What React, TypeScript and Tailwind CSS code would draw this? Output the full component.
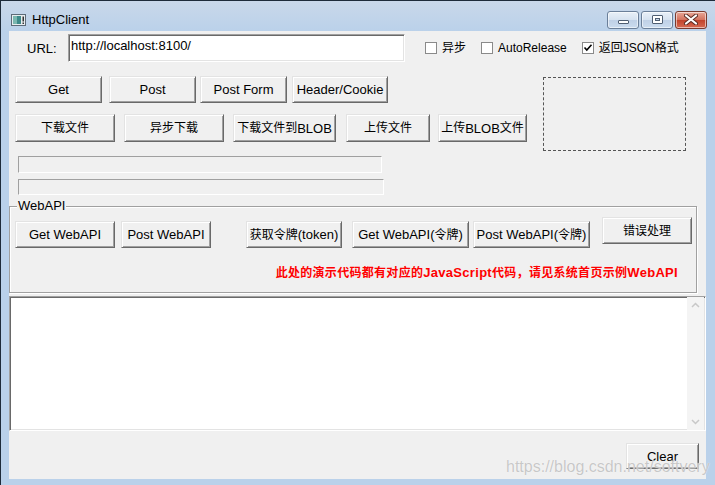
import React from "react";

const CJK = /([\u3000-\u9fff\uff00-\uffef]+)/;

function Txt({ s }: { s: string }) {
  return (
    <>
      {s.split(CJK).map((p, i) =>
        CJK.test(p) ? (
          <span key={i} className="text-[12px]">
            {p}
          </span>
        ) : (
          <React.Fragment key={i}>{p}</React.Fragment>
        )
      )}
    </>
  );
}

function Btn({
  label,
  w,
  h = 27,
  className = "",
}: {
  label: string;
  w: string;
  h?: number;
  className?: string;
}) {
  return (
    <button
      className={`${w} ${
        h === 28 ? "h-[28px]" : h === 26 ? "h-[26px]" : "h-[27px]"
      } shrink-0 bg-[#f0f0f0] border border-t-[#e3e3e3] border-l-[#e3e3e3] border-r-[#696969] border-b-[#696969] shadow-[inset_1px_1px_0_#ffffff,inset_-1px_-1px_0_#a0a0a0] text-[13px] leading-none text-black flex items-center justify-center whitespace-nowrap ${className}`}
    >
      <Txt s={label} />
    </button>
  );
}

function Check({ label, checked, className = "" }: { label: string; checked?: boolean; className?: string }) {
  return (
    <div className={`flex items-center ${className}`}>
      <div className="w-[12px] h-[12px] bg-white border border-[#8a8a8a] flex items-center justify-center">
        {checked && (
          <svg width="10" height="10" viewBox="0 0 10 10">
            <polyline points="1.5,4.5 3.8,7 8.5,1.8" fill="none" stroke="#000" strokeWidth="1.6" />
          </svg>
        )}
      </div>
      <span className="ml-[5px] text-[12px] leading-none">
        <Txt s={label} />
      </span>
    </div>
  );
}

function TitleBtn({ kind }: { kind: "min" | "max" | "close" }) {
  const isClose = kind === "close";
  return (
    <div
      className={`w-[32px] h-[18px] rounded-[3px] border flex items-center justify-center shadow-[inset_0_0_0_1px_rgba(255,255,255,0.55)] ${
        isClose
          ? "border-[#7a3a2e] bg-[linear-gradient(#e8a898,#d3705c_50%,#c2432b_51%,#d66a52)]"
          : "border-[#6b7f99] bg-[linear-gradient(#e9f0f8,#d6e2f0_50%,#bfd0e6_51%,#cbdcef)]"
      }`}
    >
      {kind === "min" && (
        <div className="w-[11px] h-[4px] mt-[5px] bg-white border border-[#4f5e72] rounded-[1px]" />
      )}
      {kind === "max" && (
        <div className="w-[11px] h-[9px] bg-white border border-[#4f5e72] rounded-[1px] flex items-center justify-center">
          <div className="w-[5px] h-[3px] bg-[#c8d6e8] border border-[#4f5e72]" />
        </div>
      )}
      {kind === "close" && (
        <svg width="14" height="11" viewBox="0 0 14 11">
          <path d="M2 1.5 L12 9.5 M12 1.5 L2 9.5" stroke="#5a2a22" strokeWidth="4" strokeLinecap="round" />
          <path d="M2 1.5 L12 9.5 M12 1.5 L2 9.5" stroke="#ffffff" strokeWidth="2.2" strokeLinecap="round" />
        </svg>
      )}
    </div>
  );
}

export default function App() {
  return (
    <div
      className="relative w-[715px] h-[485px] overflow-hidden bg-[#bad1ea] border-t border-l border-[#1e2b3a] text-black"
      style={{ fontFamily: '"Liberation Sans", "Noto Sans CJK SC", sans-serif' }}
    >
      {/* Title bar */}
      <div className="h-[30px] flex items-center bg-[linear-gradient(#c9d8ea,#bad1ea)]">
        <svg width="15" height="12" viewBox="0 0 15 12" className="ml-[10px] mt-[7px]">
          <rect x="0.5" y="0.5" width="14" height="11" fill="#e8ecef" stroke="#5d6b78" />
          <rect x="2" y="2" width="8" height="8" fill="#3e8a8a" />
          <rect x="2" y="2" width="4" height="8" fill="#7ab7b0" />
          <rect x="11.5" y="2.5" width="1.5" height="5" fill="#333" />
          <rect x="11.5" y="8.5" width="1.5" height="1.5" fill="#333" />
        </svg>
        <span className="ml-[6px] mt-[6px] text-[13px] leading-none">HttpClient</span>
        <div className="ml-auto mr-[8px] mt-[7px] flex gap-[2px]">
          <TitleBtn kind="min" />
          <TitleBtn kind="max" />
          <TitleBtn kind="close" />
        </div>
      </div>

      {/* Client area */}
      <div className="ml-[8px] w-[697px] h-[448px] bg-[#f0f0f0] flex flex-col">
        {/* URL row */}
        <div className="mt-[3px] h-[28px] flex items-center">
          <span className="pl-[18px] w-[59px] text-[13px] leading-none">URL:</span>
          <div className="w-[337px] h-[28px] bg-white border border-t-[#a0a0a0] border-l-[#a0a0a0] border-r-[#ffffff] border-b-[#ffffff] shadow-[inset_1px_1px_0_#696969,inset_-1px_-1px_0_#e3e3e3] px-[2px] pt-[3px] text-[13px] leading-[15px]">
            http://localhost:8100/
          </div>
          <Check label="异步" className="ml-[20px]" />
          <Check label="AutoRelease" className="ml-[15px]" />
          <Check label="返回JSON格式" checked className="ml-[15px]" />
        </div>

        {/* Buttons + dashed box */}
        <div className="mt-[14px] flex">
          <div className="w-[534px] flex flex-col">
            <div className="flex pl-[6px]">
              <Btn label="Get" w="w-[87px]" />
              <Btn label="Post" w="w-[87px]" className="ml-[7px]" />
              <Btn label="Post Form" w="w-[87px]" className="ml-[4px]" />
              <Btn label="Header/Cookie" w="w-[96px]" className="ml-[5px]" />
            </div>
            <div className="flex pl-[6px] mt-[11px]">
              <Btn label="下载文件" w="w-[100px]" h={28} />
              <Btn label="异步下载" w="w-[100px]" h={28} className="ml-[9px]" />
              <Btn label="下载文件到BLOB" w="w-[103px]" h={28} className="ml-[9px]" />
              <Btn label="上传文件" w="w-[84px]" h={28} className="ml-[10px]" />
              <Btn label="上传BLOB文件" w="w-[89px]" h={28} className="ml-[8px]" />
            </div>
            <div className="ml-[9px] mt-[14px] w-[364px] h-[17px] border border-t-[#a0a0a0] border-l-[#a0a0a0] border-r-white border-b-white" />
            <div className="ml-[9px] mt-[6px] w-[366px] h-[16px] border border-t-[#a0a0a0] border-l-[#a0a0a0] border-r-white border-b-white" />
          </div>
          <div className="mt-[1px] w-[143px] h-[74px] border border-dashed border-[#555555]" />
        </div>

        {/* WebAPI group */}
        <div className="relative mt-[11px] w-[688px] h-[87px] border border-[#a0a0a0] shadow-[inset_1px_1px_0_#ffffff,1px_1px_0_#ffffff]">
          <span className="absolute -top-[9px] left-[7px] px-[1px] bg-[#f0f0f0] text-[13px] leading-[16px]">
            WebAPI
          </span>
          <div className="flex items-start pt-[10px] pl-[5px]">
            <Btn label="Get WebAPI" w="w-[100px]" className="mt-[4px]" />
            <Btn label="Post WebAPI" w="w-[90px]" className="mt-[4px] ml-[6px]" />
            <Btn label="获取令牌(token)" w="w-[96px]" className="mt-[4px] ml-[35px]" />
            <Btn label="Get WebAPI(令牌)" w="w-[117px]" className="mt-[4px] ml-[10px]" />
            <Btn label="Post WebAPI(令牌)" w="w-[117px]" className="mt-[4px] ml-[4px]" />
            <Btn label="错误处理" w="w-[90px]" className="ml-[12px]" />
          </div>
          <div className="mt-[17px] pr-[18px] text-right text-[13px] leading-[16px] font-bold tracking-[0.3px] text-[#ff0000]">
            <Txt s="此处的演示代码都有对应的JavaScript代码，请见系统首页示例WebAPI" />
          </div>
        </div>

        {/* Output textarea */}
        <div className="mt-[3px] w-[697px] h-[135px] bg-white border border-t-[#a0a0a0] border-l-[#a0a0a0] border-r-white border-b-white shadow-[inset_1px_1px_0_#696969,inset_-1px_-1px_0_#e3e3e3] flex justify-end">
          <div className="w-[17px] h-full mr-[1px] bg-[#f4f4f4] flex flex-col items-center justify-between py-[5px]">
            <svg width="9" height="6" viewBox="0 0 9 6">
              <polyline points="1,5 4.5,1.5 8,5" fill="none" stroke="#c8c8c8" strokeWidth="1.5" />
            </svg>
            <svg width="9" height="6" viewBox="0 0 9 6">
              <polyline points="1,1 4.5,4.5 8,1" fill="none" stroke="#c8c8c8" strokeWidth="1.5" />
            </svg>
          </div>
        </div>

        <div className="mt-[12px] flex justify-end pr-[7px]">
          <Btn label="Clear" w="w-[73px]" h={26} />
        </div>
      </div>

      {/* Watermark */}
      <span className="absolute left-[505px] top-[456px] text-[16px] leading-[20px] text-[rgba(190,190,190,0.85)] [text-shadow:0_0_1px_#ffffff] whitespace-nowrap">
        https://blog.csdn.net/softvery
      </span>
    </div>
  );
}
